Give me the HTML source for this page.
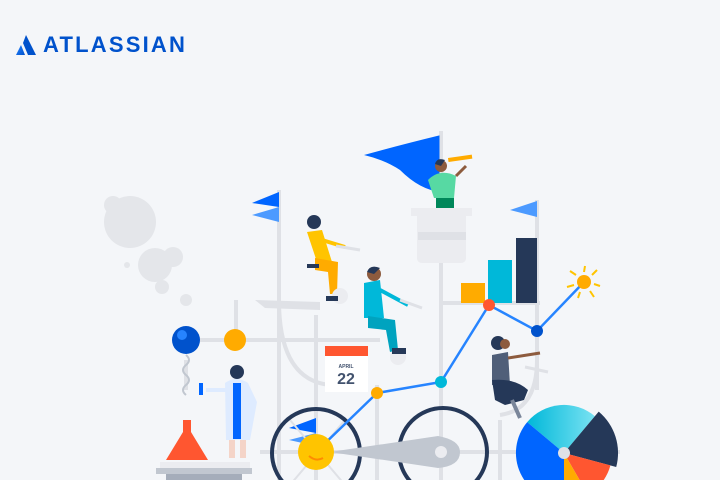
<!DOCTYPE html>
<html><head><meta charset="utf-8"><style>
html,body{margin:0;padding:0;width:720px;height:480px;overflow:hidden;background:#f4f6f9;}
.logo{position:absolute;left:16px;top:32px;display:flex;align-items:center;}
.logo span{font-family:"Liberation Sans",sans-serif;font-weight:bold;font-size:22px;color:#0052cc;letter-spacing:2.2px;margin-left:7px;}
svg.main{position:absolute;left:0;top:0;}
</style></head><body>
<svg class="main" width="720" height="480" viewBox="0 0 720 480">
<defs>
<linearGradient id="tl" x1="0" y1="0" x2="1" y2="0"><stop offset="0" stop-color="#00b8d9"/><stop offset="1" stop-color="#79e2f2"/></linearGradient>
</defs>
<g fill="#e4e6ea">
<circle cx="113" cy="205" r="9"/><circle cx="130" cy="222" r="26"/>
<circle cx="155" cy="265" r="17"/><circle cx="173" cy="257" r="10"/>
<circle cx="162" cy="287" r="7"/><circle cx="186" cy="300" r="6"/>
<circle cx="127" cy="265" r="3"/><circle cx="156" cy="258" r="2"/>
</g>
<g stroke="#dfe1e6" stroke-width="4" fill="none">
<line x1="279" y1="190" x2="279" y2="480"/>
<line x1="316" y1="315" x2="316" y2="480"/>
<line x1="441" y1="131" x2="441" y2="480"/>
<line x1="537" y1="200" x2="537" y2="390"/>
<line x1="377" y1="385" x2="377" y2="480"/>
<line x1="200" y1="340" x2="380" y2="340"/>
<line x1="186" y1="360" x2="186" y2="390"/>
<path d="M279 300 Q279 380 330 385"/>
<line x1="441" y1="303" x2="540" y2="303"/>
<line x1="260" y1="452" x2="620" y2="452"/>
<path d="M537 360 Q537 410 500 415"/>
<path d="M500 420 L500 480"/>
<line x1="236" y1="300" x2="236" y2="330"/>
</g>
<path d="M255 300 L320 302 L320 310 L265 308Z" fill="#dfe1e6"/>
<path d="M441 135 L441 192 Q420 190 400 170 Q385 160 364 155 Q400 145 441 135Z" fill="#0065ff"/>
<line x1="441" y1="131" x2="441" y2="200" stroke="#dfe1e6" stroke-width="3"/>
<path d="M279 192 L252 203 L279 207Z" fill="#0065ff"/>
<path d="M279 207 L252 215 L279 222Z" fill="#4c9aff"/>
<path d="M537 201 L510 210 L537 217Z" fill="#4c9aff"/>
<path d="M316 418 L289 428 L316 433Z" fill="#0065ff"/>
<path d="M316 433 L289 440 L316 446Z" fill="#4c9aff"/>
<path d="M411 208 L472 208 L472 216 L466 216 L466 258 Q466 263 460 263 L423 263 Q417 263 417 258 L417 216 L411 216Z" fill="#ebecf0"/>
<rect x="418" y="232" width="48" height="8" fill="#dfe1e6"/>
<rect x="436" y="196" width="18" height="12" fill="#00875a"/>
<path d="M428 180 Q440 168 456 176 L454 198 L434 198Z" fill="#57d9a3"/>
<circle cx="441" cy="166" r="6" fill="#8d5b3e"/><path d="M435 164 Q437 157 445 160 L441 166Z" fill="#253858"/>
<rect x="448" y="158" width="24" height="4" fill="#ffab00" transform="rotate(-8 448 158)"/>
<path d="M456 176 L466 166" stroke="#8d5b3e" stroke-width="3"/>
<rect x="461" y="283" width="24" height="20" fill="#ffab00"/>
<rect x="488" y="260" width="24" height="43" fill="#00b8d9"/>
<rect x="516" y="238" width="21" height="65" fill="#253858"/>
<g stroke="#ffc400" stroke-width="2">
<line x1="584" y1="272" x2="585" y2="266"/><line x1="592" y1="275" x2="597" y2="270"/><line x1="594" y1="284" x2="600" y2="286"/><line x1="590" y1="291" x2="594" y2="297"/><line x1="576" y1="275" x2="570" y2="271"/><line x1="574" y1="285" x2="567" y2="287"/><line x1="580" y1="292" x2="578" y2="298"/>
</g>
<g stroke="#dfe1e6" stroke-width="2"><line x1="290" y1="420" x2="345" y2="485"/><line x1="345" y1="420" x2="290" y2="485"/></g>
<circle cx="316" cy="453" r="44" fill="none" stroke="#253858" stroke-width="4"/>
<circle cx="443" cy="452" r="44" fill="none" stroke="#253858" stroke-width="4"/>
<path d="M330 452 L438 436 Q460 440 460 452 Q460 466 438 468Z" fill="#c1c7d0"/>
<circle cx="441" cy="452" r="6" fill="#ebecf0"/>
<polyline points="316,452 377,393 441,382 489,305 537,331 584,282" fill="none" stroke="#2684ff" stroke-width="2.5"/>
<circle cx="377" cy="393" r="6" fill="#ffab00"/>
<circle cx="441" cy="382" r="6" fill="#00b8d9"/>
<circle cx="489" cy="305" r="6" fill="#ff5630"/>
<circle cx="537" cy="331" r="6" fill="#0052cc"/>
<circle cx="584" cy="282" r="7" fill="#ffab00"/>
<circle cx="316" cy="452" r="18" fill="#ffc400"/>
<path d="M309 456 Q316 462 323 458" stroke="#ff8b00" stroke-width="2" fill="none"/>
<path d="M564 453 L527.2 422.1 A48 48 0 0 1 594.9 416.2Z" fill="url(#tl)"/>
<path d="M564 453 L598.7 411.6 A54 54 0 0 1 616.2 467Z" fill="#253858"/>
<path d="M564 453 L610.4 465.4 A48 48 0 0 1 588 494.6Z" fill="#ff5630"/>
<path d="M564 453 L588 494.6 A48 48 0 0 1 564 501Z" fill="#ffab00"/>
<path d="M564 453 L564 501 A48 48 0 0 1 527.2 422.1Z" fill="#0065ff"/>
<circle cx="564" cy="453" r="6" fill="#dfe1e6"/>
<rect x="325" y="346" width="43" height="46" fill="#fff"/>
<rect x="325" y="346" width="43" height="10" fill="#ff5630"/>
<text x="346" y="368" font-family="Liberation Sans,sans-serif" font-size="5" font-weight="bold" fill="#42526e" text-anchor="middle">APRIL</text>
<text x="346" y="384" font-family="Liberation Sans,sans-serif" font-size="16" font-weight="bold" fill="#42526e" text-anchor="middle">22</text>
<circle cx="186" cy="340" r="14" fill="#0052cc"/><circle cx="182" cy="335" r="5" fill="#2684ff"/>
<circle cx="235" cy="340" r="11" fill="#ffab00"/>
<path d="M186 355 q6 5 0 10 q-6 5 0 10 q6 5 0 10 q-6 5 0 10" stroke="#c1c7d0" stroke-width="2" fill="none"/>
<path d="M183 420 L191 420 L191 432 L208 460 L166 460 L183 432Z" fill="#ff5630"/>
<rect x="160" y="462" width="90" height="10" fill="#ebecf0"/>
<rect x="156" y="468" width="96" height="6" fill="#c1c7d0"/>
<rect x="166" y="474" width="76" height="6" fill="#a5adba"/>
<path d="M225 383 Q236 375 248 383 L257 402 L250 440 L226 440 Z" fill="#deebff"/>
<rect x="233" y="383" width="8" height="56" fill="#0065ff"/>
<circle cx="237" cy="372" r="7" fill="#253858"/>
<rect x="229" y="440" width="6" height="18" fill="#f4d4c8"/><rect x="240" y="440" width="6" height="18" fill="#f4d4c8"/>
<path d="M226 390 L206 390" stroke="#deebff" stroke-width="4"/>
<rect x="199" y="383" width="4" height="12" fill="#0065ff"/>
<path d="M307 232 L322 230 L332 262 L318 265Z" fill="#ffc400"/>
<path d="M315 258 L338 262 L337 294 L330 294 L328 272 L315 270Z" fill="#ffab00"/>
<circle cx="314" cy="222" r="7" fill="#253858"/>
<path d="M322 240 L345 247" stroke="#ffc400" stroke-width="4"/>
<path d="M336 246 L360 250" stroke="#dfe1e6" stroke-width="3"/>
<circle cx="340" cy="296" r="8" fill="#ebecf0"/>
<rect x="326" y="296" width="12" height="5" fill="#253858"/>
<rect x="307" y="264" width="12" height="4" fill="#253858"/>
<path d="M364 283 L380 280 L384 318 L364 318Z" fill="#00b8d9"/>
<path d="M380 290 L408 305" stroke="#00b8d9" stroke-width="4"/>
<path d="M368 316 L395 320 L398 350 L390 352 L386 330 L368 328Z" fill="#00a3bf"/>
<circle cx="374" cy="274" r="7" fill="#8d5b3e"/><path d="M367 272 Q370 264 380 268 L374 274Z" fill="#253858"/>
<circle cx="398" cy="357" r="8" fill="#ebecf0"/>
<rect x="392" y="348" width="14" height="6" fill="#253858"/>
<path d="M400 300 L422 308" stroke="#dfe1e6" stroke-width="3"/>
<circle cx="498" cy="343" r="7" fill="#253858"/><circle cx="505" cy="344" r="5" fill="#8d5b3e"/>
<path d="M492 355 L508 352 L510 385 L492 385Z" fill="#505f79"/>
<path d="M492 380 Q515 378 528 390 L524 400 L505 405 L495 400Z" fill="#253858"/>
<path d="M508 358 L540 353" stroke="#8d5b3e" stroke-width="3"/>
<path d="M525 367 L548 372" stroke="#dfe1e6" stroke-width="3"/>
<path d="M512 400 L520 418" stroke="#7a869a" stroke-width="4"/>
</svg>
<div class="logo">
<svg width="20" height="20" viewBox="0 0 20 20"><defs><linearGradient id="lg2" x1="0" y1="0" x2="1" y2="1"><stop offset="0" stop-color="#2684ff"/><stop offset="1" stop-color="#0052cc"/></linearGradient></defs><path d="M10 0 L20 20 L12 20 L7 8Z" fill="#0052cc"/><path d="M5 10 L9 20 L0 20Z" fill="url(#lg2)"/></svg>
<span>ATLASSIAN</span>
</div>
</body></html>
